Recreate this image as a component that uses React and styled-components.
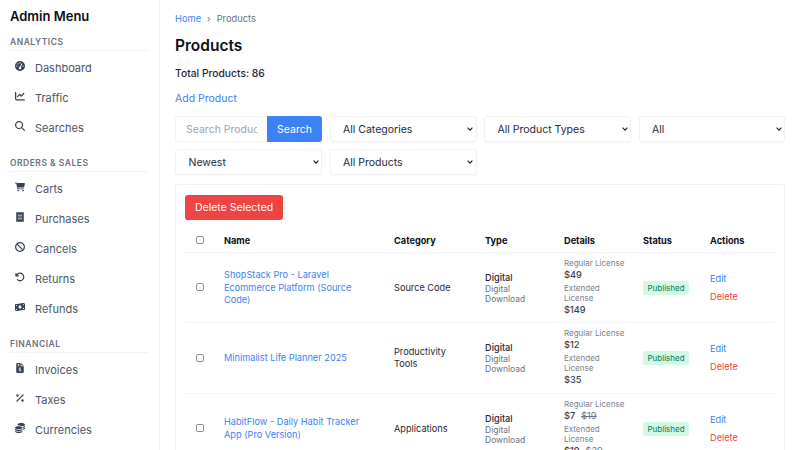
import React from "react";
import styled, { createGlobalStyle } from "styled-components";
import {
  FaGaugeHigh,
  FaChartLine,
  FaMagnifyingGlass,
  FaCartShopping,
  FaReceipt,
  FaBan,
  FaRotateLeft,
  FaMoneyBillWave,
  FaFileInvoiceDollar,
  FaPercent,
  FaCoins,
} from "react-icons/fa6";

const GlobalStyle = createGlobalStyle`
  html, body {
    margin: 0;
    height: 100%;
    overflow: hidden;
    background: #fff;
    font-family: Inter, "Open Sans", sans-serif;
  }
  * {
    box-sizing: border-box;
  }
`;

const Layout = styled.div`
  display: flex;
  width: 800px;
  height: 450px;
  overflow: hidden;
`;

const Sidebar = styled.aside`
  flex: 0 0 160px;
  height: 450px;
  padding: 8px 10px 0;
  border-right: 1px solid #f1f3f6;
  overflow: hidden;
`;

const SideTitle = styled.h2`
  margin: 0 0 11px;
  font-size: 13px;
  line-height: 17px;
  font-weight: 600;
  color: #0b0f19;
`;

const SideSection = styled.section`
  margin-bottom: 14px;
`;

const SectionLabel = styled.div`
  height: 15px;
  font-size: 8.5px;
  line-height: 12px;
  font-weight: 600;
  letter-spacing: 0.5px;
  color: #6b7280;
  border-bottom: 1px solid #f1f3f6;
`;

const SideList = styled.ul`
  list-style: none;
  margin: 0;
  padding: 2px 0 0;
`;

const SideItem = styled.li`
  display: flex;
  align-items: center;
  height: 30px;
  padding-left: 5px;
  font-size: 11px;
  color: #4b5563;

  svg {
    flex: 0 0 10px;
    width: 10px;
    height: 10px;
    margin: -5px 10px 0 0;
    color: #374151;
  }
`;

const Main = styled.main`
  flex: 1;
  min-width: 0;
  padding: 13px 15px 0;
`;

const Breadcrumb = styled.nav`
  display: flex;
  align-items: center;
  gap: 6px;
  font-size: 9.3px;
  line-height: 12px;
  color: #6b7280;

  a {
    color: #3b82f6;
  }
`;

const PageTitle = styled.h1`
  margin: 10px 0 0;
  font-size: 15.5px;
  line-height: 22px;
  font-weight: 600;
  color: #0b0f19;
`;

const TotalLine = styled.p`
  margin: 8px 0 0;
  font-size: 10.3px;
  line-height: 16px;
  font-weight: 500;
  color: #1f2937;
`;

const AddLink = styled.a`
  display: block;
  margin-top: 10px;
  font-size: 10.5px;
  line-height: 16px;
  color: #3b82f6;
`;

const Filters = styled.div`
  display: grid;
  grid-template-columns: 147px 147px 147px 146.5px;
  gap: 7px 7.5px;
  margin-top: 9px;
`;

const SearchBox = styled.form`
  display: flex;
  height: 26px;
  margin: 0;
`;

const SearchInput = styled.input`
  flex: 1;
  min-width: 0;
  padding: 0 10px;
  border: 1px solid #f3f4f6;
  border-right: 0;
  border-radius: 3px 0 0 3px;
  outline: none;
  font: inherit;
  font-size: 10.5px;
  color: #1f2937;

  &::placeholder {
    color: #9ca3af;
  }
`;

const SearchButton = styled.button`
  flex: 0 0 55px;
  border: 0;
  border-radius: 0 3px 3px 0;
  background: #3b82f6;
  color: #fff;
  font: inherit;
  font-size: 10.5px;
`;

const Select = styled.select`
  appearance: none;
  width: 100%;
  height: 26px;
  padding: 0 10px 0 12.5px;
  border: 1px solid #f0f1f3;
  border-radius: 3px;
  background: #fff
    url("data:image/svg+xml,%3Csvg xmlns='http://www.w3.org/2000/svg' viewBox='0 0 6 4'%3E%3Cpath d='M.6.7 3 3.1 5.4.7' fill='none' stroke='%23222' stroke-width='1.2'/%3E%3C/svg%3E")
    no-repeat right 2.5px center / 6px 4px;
  box-shadow: 0 1px 2px rgba(0, 0, 0, 0.03);
  outline: none;
  font: inherit;
  font-size: 10.5px;
  color: #1f2937;
`;

const TableCard = styled.section`
  margin-top: 9px;
  width: 610px;
  padding: 10px 10px 0 9px;
  border: 1px solid #f0f1f3;
  border-radius: 3px;
`;

const DeleteButton = styled.button`
  display: block;
  height: 25px;
  padding: 0 10px;
  border: 0;
  border-radius: 3px;
  background: #ef4444;
  color: #fff;
  font: inherit;
  font-size: 10.5px;
`;

const Table = styled.table`
  width: 590px;
  margin-top: 8px;
  table-layout: fixed;
  border-collapse: collapse;

  th {
    height: 24px;
    padding: 2px 8px 0;
    text-align: left;
    font-size: 9.2px;
    font-weight: 700;
    color: #0b0f19;
    border-bottom: 1px solid #f1f3f6;
  }

  td {
    height: 70.5px;
    padding: 1px 8px 0;
    font-size: 9.2px;
    line-height: 12.5px;
    color: #1f2937;
    vertical-align: middle;
    border-bottom: 1px solid #f1f3f6;
  }

  th:first-child,
  td:first-child {
    padding: 0 0 0 10.5px;
  }
`;

const Check = styled.input.attrs({ type: "checkbox" })`
  appearance: none;
  display: block;
  width: 8px;
  height: 8px;
  margin: 0;
  border: 1px solid #8f8f8f;
  border-radius: 2px;
  background: #fff;
`;

const ProductLink = styled.a`
  color: #3b82f6;
`;

const TypeName = styled.div`
  font-weight: 500;
  line-height: 12px;
  color: #1f2937;
`;

const TypeSub = styled.div`
  font-size: 8.5px;
  line-height: 10px;
  color: #6b7280;
`;

const LicenseLabel = styled.div`
  font-size: 8px;
  line-height: 10px;
  color: #787f8b;
`;

const Price = styled.div`
  margin: 1px 0 3px;
  font-size: 9.2px;
  line-height: 11px;
  font-weight: 500;
  color: #374151;

  s {
    margin-left: 6px;
    font-weight: 400;
    color: #6b7280;
  }
`;

const Badge = styled.span`
  display: inline-block;
  padding: 0 4.5px;
  height: 14px;
  line-height: 14px;
  border-radius: 2px;
  background: #d1fae5;
  color: #047857;
  font-size: 8px;
`;

const ActionLink = styled.a`
  display: block;
  font-size: 9.2px;
  line-height: 12px;
  color: ${(p) => (p.$danger ? "#ef4444" : "#3b82f6")};
  margin-top: ${(p) => (p.$danger ? "6px" : "0")};
`;

const menu = [
  {
    label: "ANALYTICS",
    items: [
      ["Dashboard", FaGaugeHigh],
      ["Traffic", FaChartLine],
      ["Searches", FaMagnifyingGlass],
    ],
  },
  {
    label: "ORDERS & SALES",
    items: [
      ["Carts", FaCartShopping],
      ["Purchases", FaReceipt],
      ["Cancels", FaBan],
      ["Returns", FaRotateLeft],
      ["Refunds", FaMoneyBillWave],
    ],
  },
  {
    label: "FINANCIAL",
    items: [
      ["Invoices", FaFileInvoiceDollar],
      ["Taxes", FaPercent],
      ["Currencies", FaCoins],
    ],
  },
];

const products = [
  {
    name: "ShopStack Pro - Laravel Ecommerce Platform (Source Code)",
    category: "Source Code",
    regular: "$49",
    extended: "$149",
  },
  {
    name: "Minimalist Life Planner 2025",
    category: "Productivity Tools",
    regular: "$12",
    extended: "$35",
  },
  {
    name: "HabitFlow - Daily Habit Tracker App (Pro Version)",
    category: "Applications",
    regular: "$7",
    regularOld: "$19",
    extended: "$19",
    extendedOld: "$39",
  },
];

const App = () => (
  <Layout>
    <GlobalStyle />
    <Sidebar>
      <SideTitle>Admin Menu</SideTitle>
      {menu.map((group) => (
        <SideSection key={group.label}>
          <SectionLabel>{group.label}</SectionLabel>
          <SideList>
            {group.items.map(([name, Icon]) => (
              <SideItem key={name}>
                <Icon />
                {name}
              </SideItem>
            ))}
          </SideList>
        </SideSection>
      ))}
    </Sidebar>
    <Main>
      <Breadcrumb>
        <a>Home</a>
        <span>›</span>
        <span>Products</span>
      </Breadcrumb>
      <PageTitle>Products</PageTitle>
      <TotalLine>Total Products: 86</TotalLine>
      <AddLink>Add Product</AddLink>
      <Filters>
        <SearchBox>
          <SearchInput placeholder="Search Products" />
          <SearchButton type="button">Search</SearchButton>
        </SearchBox>
        <Select>
          <option>All Categories</option>
        </Select>
        <Select>
          <option>All Product Types</option>
        </Select>
        <Select>
          <option>All</option>
        </Select>
        <Select>
          <option>Newest</option>
        </Select>
        <Select>
          <option>All Products</option>
        </Select>
      </Filters>
      <TableCard>
        <DeleteButton>Delete Selected</DeleteButton>
        <Table>
          <colgroup>
            <col width="31" />
            <col width="170" />
            <col width="91" />
            <col width="79" />
            <col width="79" />
            <col width="67" />
            <col width="73" />
          </colgroup>
          <thead>
            <tr>
              <th>
                <Check />
              </th>
              <th>Name</th>
              <th>Category</th>
              <th>Type</th>
              <th>Details</th>
              <th>Status</th>
              <th>Actions</th>
            </tr>
          </thead>
          <tbody>
            {products.map((p) => (
              <tr key={p.name}>
                <td>
                  <Check />
                </td>
                <td>
                  <ProductLink>{p.name}</ProductLink>
                </td>
                <td>{p.category}</td>
                <td>
                  <TypeName>Digital</TypeName>
                  <TypeSub>Digital Download</TypeSub>
                </td>
                <td>
                  <LicenseLabel>Regular License</LicenseLabel>
                  <Price>
                    {p.regular}
                    {p.regularOld && <s>{p.regularOld}</s>}
                  </Price>
                  <LicenseLabel>Extended License</LicenseLabel>
                  <Price>
                    {p.extended}
                    {p.extendedOld && <s>{p.extendedOld}</s>}
                  </Price>
                </td>
                <td>
                  <Badge>Published</Badge>
                </td>
                <td>
                  <ActionLink>Edit</ActionLink>
                  <ActionLink $danger>Delete</ActionLink>
                </td>
              </tr>
            ))}
          </tbody>
        </Table>
      </TableCard>
    </Main>
  </Layout>
);

export default App;
